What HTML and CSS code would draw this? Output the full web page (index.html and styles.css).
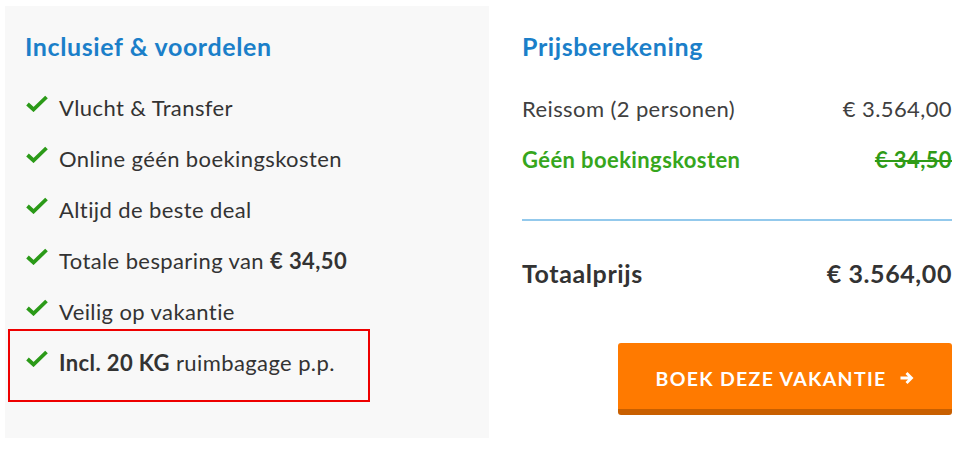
FILE: index.html
```html
<!DOCTYPE html>
<html lang="nl">
<head>
<meta charset="utf-8">
<link rel="stylesheet" href="styles.css">
</head>
<body>
<div class="wrap">
  <section class="incl">
    <h2 class="title">Inclusief &amp; voordelen</h2>
    <ul class="list">
      <li class="item"><svg class="check" viewBox="0 0 22 17"><path d="M1.5 9 L7.5 14.5 L20.5 2" /></svg><span>Vlucht &amp; Transfer</span></li>
      <li class="item"><svg class="check" viewBox="0 0 22 17"><path d="M1.5 9 L7.5 14.5 L20.5 2" /></svg><span>Online géén boekingskosten</span></li>
      <li class="item"><svg class="check" viewBox="0 0 22 17"><path d="M1.5 9 L7.5 14.5 L20.5 2" /></svg><span>Altijd de beste deal</span></li>
      <li class="item"><svg class="check" viewBox="0 0 22 17"><path d="M1.5 9 L7.5 14.5 L20.5 2" /></svg><span>Totale besparing van <b>€ 34,50</b></span></li>
      <li class="item"><svg class="check" viewBox="0 0 22 17"><path d="M1.5 9 L7.5 14.5 L20.5 2" /></svg><span>Veilig op vakantie</span></li>
      <li class="item highlight"><svg class="check" viewBox="0 0 22 17"><path d="M1.5 9 L7.5 14.5 L20.5 2" /></svg><span><b>Incl. 20 KG</b> ruimbagage p.p.</span></li>
    </ul>
  </section>
  <section class="price">
    <h2 class="title">Prijsberekening</h2>
    <div class="row"><span>Reissom (2 personen)</span><span>€ 3.564,00</span></div>
    <div class="row green"><span>Géén boekingskosten</span><s>€ 34,50</s></div>
    <hr class="divider">
    <div class="row total"><span>Totaalprijs</span><span>€ 3.564,00</span></div>
    <div class="actions">
      <a class="btn" href="#">BOEK DEZE VAKANTIE <svg class="arrow" viewBox="0 0 15 14"><path d="M1.5 7 H12.5 M7.5 2 L12.5 7 L7.5 12" /></svg></a>
    </div>
  </section>
</div>
</body>
</html>
```
FILE: styles.css
```css
* { box-sizing: border-box; }
html, body { margin: 0; padding: 0; background: #fff; }
body {
  font-family: Lato, "Open Sans", Arial, sans-serif;
  color: #333;
  width: 971px;
  height: 450px;
  overflow: hidden;
}
.wrap {
  display: flex;
  padding: 6px 19px 0 5px;
}
.incl {
  width: 484px;
  height: 432px;
  background: #f8f8f8;
  padding: 25px 0 0 20px;
}
.title {
  margin: 0;
  font-size: 25px;
  line-height: 30px;
  letter-spacing: 0.6px;
  font-weight: 700;
  color: #1b7fc9;
}
.list {
  list-style: none;
  margin: 21px 0 0 0;
  padding: 0;
}
.item {
  display: flex;
  align-items: center;
  height: 51px;
  font-size: 22px;
  letter-spacing: 0.4px;
  color: #333;
}
.item b { font-weight: 700; }
.check {
  width: 22px;
  height: 17px;
  margin: -8px 11px 0 1px;
  flex: none;
}
.check path {
  fill: none;
  stroke: #2b9a18;
  stroke-width: 3.8;
}
.highlight {
  position: relative;
}
.highlight::before {
  content: "";
  position: absolute;
  left: -17px;
  top: -8px;
  width: 358px;
  height: 69px;
  border: 2px solid #ee0000;
}
.price {
  flex: 1;
  padding: 25px 0 0 33px;
}
.price .title { margin-bottom: 22px; }
.row {
  display: flex;
  justify-content: space-between;
  align-items: center;
  font-size: 22px;
  letter-spacing: 0.4px;
  height: 51px;
  color: #404040;
}
.green {
  color: #36a61c;
  font-weight: 700;
}
.green s {
  text-decoration-thickness: 2px;
  color: #2f9b17;
}
.divider {
  border: 0;
  height: 2px;
  background: #93c9ec;
  margin: 34px 0 26px 0;
}
.total {
  font-size: 25px;
  letter-spacing: 0.6px;
  font-weight: 700;
  color: #333;
}
.actions {
  display: flex;
  justify-content: flex-end;
  margin-top: 45px;
}
.btn {
  display: flex;
  align-items: center;
  justify-content: center;
  gap: 13px;
  width: 334px;
  height: 72px;
  background: #ff7a00;
  border-bottom: 6px solid #c85f00;
  border-radius: 3px;
  color: #fff;
  font-size: 19.5px;
  font-weight: 700;
  letter-spacing: 1.3px;
  text-decoration: none;
  padding-top: 4px;
}
.arrow {
  width: 15px;
  height: 14px;
}
.arrow path {
  fill: none;
  stroke: #fff;
  stroke-width: 2.8;
}
```
